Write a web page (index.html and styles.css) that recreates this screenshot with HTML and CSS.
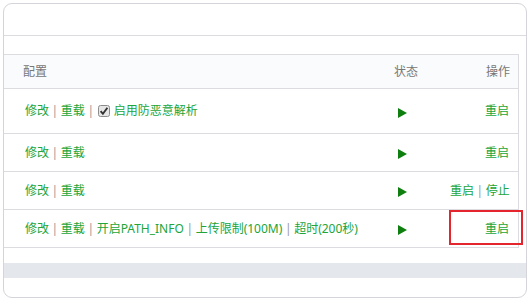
FILE: index.html
```html
<!DOCTYPE html>
<html lang="zh-CN">
<head>
<meta charset="utf-8">
<link rel="stylesheet" href="styles.css">
</head>
<body>
<div class="card">
  <div class="card-head"></div>
  <div class="card-body">
    <div class="tbl">
      <div class="row head">
        <div class="c1">配置</div>
        <div class="c2">状态</div>
        <div class="c3">操作</div>
      </div>
      <div class="row r1">
        <div class="c1"><a>修改</a><span class="sep">|</span><a>重载</a><span class="sep">|</span><span class="cb"><svg width="12" height="12" viewBox="0 0 12 12"><rect x="0.5" y="0.5" width="11" height="11" rx="2" fill="#e6e6e6" stroke="#8c8c8c"/><path d="M2.6 6.2 L4.9 8.8 L9.4 2.8" fill="none" stroke="#333" stroke-width="1.9"/></svg></span><a>启用防恶意解析</a></div>
        <div class="c2"><svg class="play" width="9" height="10" viewBox="0 0 9 10"><polygon points="0,0 9,5 0,10" fill="#0e7f0e"/></svg></div>
        <div class="c3"><a>重启</a></div>
      </div>
      <div class="row">
        <div class="c1"><a>修改</a><span class="sep">|</span><a>重载</a></div>
        <div class="c2"><svg class="play" width="9" height="10" viewBox="0 0 9 10"><polygon points="0,0 9,5 0,10" fill="#0e7f0e"/></svg></div>
        <div class="c3"><a>重启</a></div>
      </div>
      <div class="row">
        <div class="c1"><a>修改</a><span class="sep">|</span><a>重载</a></div>
        <div class="c2"><svg class="play" width="9" height="10" viewBox="0 0 9 10"><polygon points="0,0 9,5 0,10" fill="#0e7f0e"/></svg></div>
        <div class="c3"><a>重启</a><span class="sep">|</span><a>停止</a></div>
      </div>
      <div class="row">
        <div class="c1"><a>修改</a><span class="sep">|</span><a>重载</a><span class="sep">|</span><a>开启PATH_INFO</a><span class="sep">|</span><a>上传限制(100M)</a><span class="sep">|</span><a>超时(200秒)</a></div>
        <div class="c2"><svg class="play" width="9" height="10" viewBox="0 0 9 10"><polygon points="0,0 9,5 0,10" fill="#0e7f0e"/></svg></div>
        <div class="c3"><a>重启</a></div>
      </div>
    </div>
    <div class="band"></div>
  </div>
  <div class="highlight"></div>
</div>
</body>
</html>
```
FILE: styles.css
```css
* { box-sizing: border-box; }
html, body { margin: 0; padding: 0; background: #fff; }
body {
  padding: 3px 3px 0 3px;
  font-family: "Noto Sans", "Noto Sans CJK SC", sans-serif;
  font-size: 12px;
  color: #666;
}
.card {
  position: relative;
  width: 524px;
  height: 295px;
  border: 1px solid #d4d4da;
  border-radius: 9px;
  overflow: hidden;
}
.card-head {
  height: 32px;
  border-bottom: 1px solid #dcdce0;
}
.card-body {
  padding-top: 18px;
}
.tbl {
  width: 515px;
  border-top: 1px solid #dcdce0;
  border-right: 1px solid #dcdce0;
}
.row {
  display: grid;
  grid-template-columns: 386px 60px 68px;
  align-items: center;
  height: 38px;
  border-bottom: 1px solid #dcdce0;
  line-height: 16px;
}
.row.head {
  height: 34px;
  background: #fafbfc;
  color: #777;
}
.row.r1 { height: 45px; }
.c1 { padding-left: 21px; white-space: nowrap; display: flex; align-items: center; }
.head .c1 { padding-left: 19px; }
.c2 { padding-left: 8px; display: flex; }
.head .c2 { padding-left: 4px; }
.c3 { text-align: right; padding-right: 9px; white-space: nowrap; }
.head .c3 { padding-right: 8px; }
a { color: #20a53a; text-decoration: none; }
.sep { color: #9a9a9a; margin: 0 2.6px; }
.cb { display: inline-flex; margin: 0 4px 0 1px; }
.play { margin-top: 3px; }
.band {
  margin-top: 15px;
  height: 15px;
  background: #e4e7eb;
}
.highlight {
  position: absolute;
  left: 445px;
  top: 206px;
  width: 74px;
  height: 35px;
  border: 2px solid #e5252d;
}
```
